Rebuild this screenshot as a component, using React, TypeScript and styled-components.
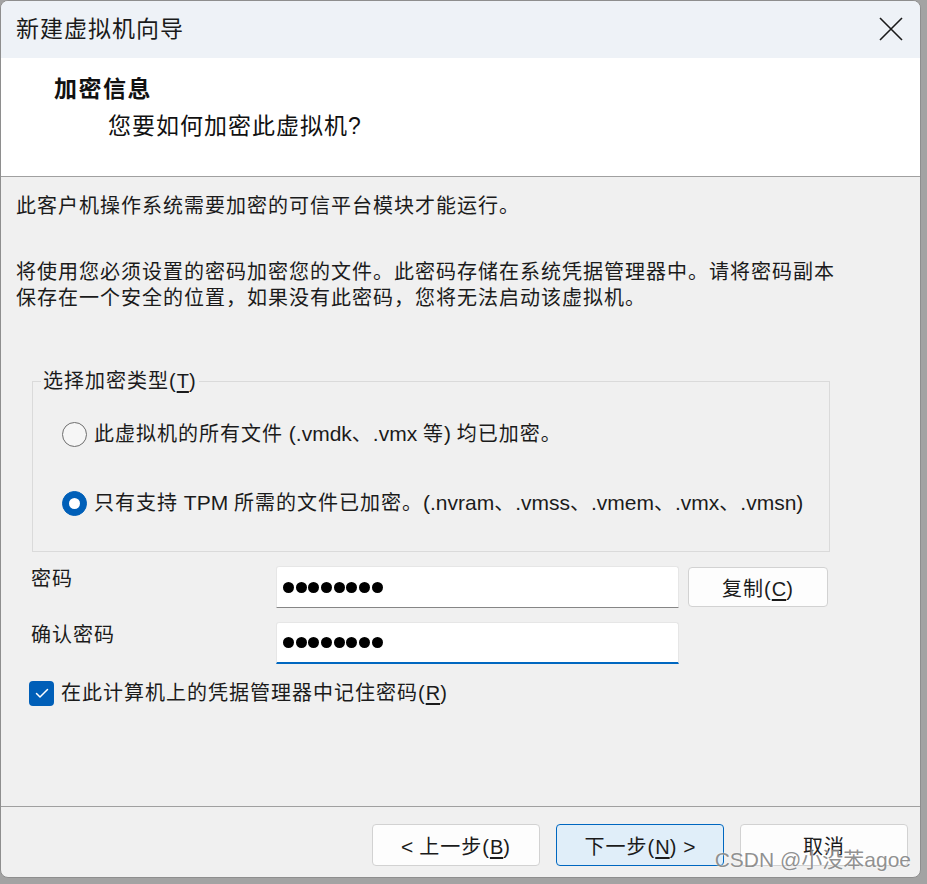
import React from "react";
import styled, { createGlobalStyle } from "styled-components";

const GlobalStyle = createGlobalStyle`
  html, body { margin: 0; padding: 0; background: #a3a3a3; }
  body {
    font-family: "Liberation Sans", "Noto Sans CJK SC", sans-serif;
    color: #1b1b1b;
  }
  * { box-sizing: border-box; }
`;

const Window = styled.div`
  position: relative;
  width: 921px;
  height: 878px;
  background: #f0f0f0;
  border: 1px solid #8e8e8e;
  border-radius: 8px;
  overflow: hidden;
  display: flex;
  flex-direction: column;
`;

const TitleBar = styled.div`
  height: 57px;
  flex: none;
  background: #eef2f7;
  display: flex;
  align-items: center;
  justify-content: space-between;
  padding: 0 16px 0 15px;
`;

const TitleText = styled.div`
  font-size: 23px;
  letter-spacing: 1px;
  line-height: 30px;
  color: #1a1a1a;
  padding-bottom: 2px;
`;

const CloseButton = styled.div`
  width: 26px;
  height: 26px;
  display: flex;
  align-items: center;
  justify-content: center;
  margin-bottom: 1px;
`;

const Header = styled.div`
  flex: none;
  height: 119px;
  background: #ffffff;
  border-bottom: 1px solid #a0a0a0;
  padding: 16px 0 0 53px;
`;

const HeaderTitle = styled.div`
  font-size: 23px;
  font-weight: 700;
  letter-spacing: 1.5px;
  line-height: 30px;
  color: #111;
`;

const HeaderSub = styled.div`
  margin-top: 7px;
  padding-left: 54px;
  font-size: 23px;
  letter-spacing: 1px;
  line-height: 30px;
  color: #111;
`;

const Body = styled.div`
  flex: 1;
  padding: 16px 0 0 15px;
  display: flex;
  flex-direction: column;
  align-items: flex-start;
`;

const Text = styled.div<{ $gap?: number }>`
  margin-top: ${(p) => p.$gap ?? 0}px;
  font-size: 20px;
  letter-spacing: 1px;
  line-height: 26px;
  color: #1b1b1b;
`;

const Group = styled.fieldset`
  margin: 57px 0 0 16px;
  width: 798px;
  padding: 25px 0 33px 8px;
  border: 1px solid #dadada;
  min-width: 0;
`;

const Legend = styled.legend`
  padding: 0 2px;
  font-size: 20px;
  letter-spacing: 1px;
  line-height: 26px;
  color: #1b1b1b;
`;

const RadioList = styled.div`
  display: flex;
  flex-direction: column;
  gap: 39px;
  padding-left: 21px;
`;

const RadioRow = styled.label`
  display: flex;
  align-items: center;
  gap: 7px;
  height: 30px;
  font-size: 20px;
  letter-spacing: 1px;
  line-height: 30px;
  color: #1b1b1b;
`;

const RadioCircle = styled.span<{ $checked?: boolean }>`
  flex: none;
  width: 25px;
  height: 25px;
  border-radius: 50%;
  display: flex;
  align-items: center;
  justify-content: center;
  background: ${(p) => (p.$checked ? "#005fb8" : "#f6f6f6")};
  border: 1px solid ${(p) => (p.$checked ? "#005fb8" : "#6e6e6e")};
  &::after {
    content: "";
    display: ${(p) => (p.$checked ? "block" : "none")};
    width: 11px;
    height: 11px;
    border-radius: 50%;
    background: #ffffff;
  }
`;

const Latin = styled.span`
  letter-spacing: 0;
  font-size: 21px;
`;

const FormGrid = styled.div`
  margin-top: 14px;
  padding-left: 15px;
  display: grid;
  grid-template-columns: 236px 403px 140px;
  column-gap: 9px;
  row-gap: 14px;
  align-items: start;
`;

const FieldLabel = styled.div`
  font-size: 20px;
  letter-spacing: 1px;
  line-height: 26px;
  color: #1b1b1b;
`;

const PasswordBox = styled.div<{ $focused?: boolean }>`
  height: 42px;
  background: #ffffff;
  border: 1px solid #e6e6e6;
  border-bottom: ${(p) => (p.$focused ? "2px solid #0067c0" : "1px solid #868686")};
  border-radius: 3px 3px 0 0;
  display: flex;
  align-items: center;
  gap: 1.7px;
  padding: ${(p) => (p.$focused ? "0 0 0 6px" : "1px 0 0 6px")};
`;

const Dot = styled.span`
  width: 11px;
  height: 11px;
  border-radius: 50%;
  background: #000;
`;

const Button = styled.button<{ $primary?: boolean }>`
  height: 42px;
  padding: 0;
  font-family: inherit;
  font-size: 20px;
  letter-spacing: 1px;
  color: #1b1b1b;
  background: ${(p) => (p.$primary ? "#e0eef9" : "#fdfdfd")};
  border: 1px solid ${(p) => (p.$primary ? "#0067c0" : "#d2d2d2")};
  border-radius: 4px;
  display: flex;
  align-items: center;
  justify-content: center;
  white-space: pre;
`;

const CopyButton = styled(Button)`
  height: 40px;
  margin-top: 1px;
`;

const Mn = styled.span`
  text-decoration: underline;
  text-underline-offset: 3px;
  letter-spacing: 0;
`;

const CheckRow = styled.label`
  margin-top: 16px;
  padding-left: 13px;
  display: flex;
  align-items: center;
  gap: 7px;
  font-size: 20px;
  letter-spacing: 1px;
  line-height: 26px;
  color: #1b1b1b;
`;

const CheckBox = styled.span`
  flex: none;
  width: 25px;
  height: 25px;
  border-radius: 4px;
  background: #005fb8;
  display: flex;
  align-items: center;
  justify-content: center;
`;

const Footer = styled.div`
  flex: none;
  border-top: 1px solid #a0a0a0;
  padding: 17px 12px 11px 0;
  display: flex;
  justify-content: flex-end;
  gap: 16px;
`;

const FooterButton = styled(Button)`
  width: 168px;
`;

const Watermark = styled.div`
  position: absolute;
  right: 9px;
  bottom: 5px;
  font-family: "Liberation Sans", "Noto Sans CJK SC", sans-serif;
  font-size: 21px;
  line-height: 24px;
  color: rgba(125, 125, 125, 0.85);
  text-shadow: 0 0 2px rgba(255, 255, 255, 0.9);
  pointer-events: none;
`;

const Dots: React.FC = () => (
  <>
    {Array.from({ length: 8 }).map((_, i) => (
      <Dot key={i} />
    ))}
  </>
);

export default function App() {
  return (
    <>
      <GlobalStyle />
      <Window>
        <TitleBar>
          <TitleText>新建虚拟机向导</TitleText>
          <CloseButton>
            <svg width="24" height="24" viewBox="0 0 24 24">
              <path d="M1 1 L23 23 M23 1 L1 23" stroke="#1a1a1a" strokeWidth="1.6" fill="none" />
            </svg>
          </CloseButton>
        </TitleBar>
        <Header>
          <HeaderTitle>加密信息</HeaderTitle>
          <HeaderSub>您要如何加密此虚拟机?</HeaderSub>
        </Header>
        <Body>
          <Text>此客户机操作系统需要加密的可信平台模块才能运行。</Text>
          <Text $gap={40}>
            将使用您必须设置的密码加密您的文件。此密码存储在系统凭据管理器中。请将密码副本
            <br />
            保存在一个安全的位置，如果没有此密码，您将无法启动该虚拟机。
          </Text>
          <Group>
            <Legend>
              选择加密类型(<Mn>T</Mn>)
            </Legend>
            <RadioList>
              <RadioRow>
                <RadioCircle />
                <span>
                  此虚拟机的所有文件<Latin> (.vmdk</Latin>、<Latin>.vmx </Latin>等<Latin>) </Latin>均已加密。
                </span>
              </RadioRow>
              <RadioRow>
                <RadioCircle $checked />
                <span>
                  只有支持<Latin> TPM </Latin>所需的文件已加密。<Latin>(.nvram</Latin>、<Latin>.vmss</Latin>、<Latin>.vmem</Latin>、<Latin>.vmx</Latin>、<Latin>.vmsn)</Latin>
                </span>
              </RadioRow>
            </RadioList>
          </Group>
          <FormGrid>
            <FieldLabel>密码</FieldLabel>
            <PasswordBox>
              <Dots />
            </PasswordBox>
            <CopyButton>
              <span>
                复制(<Mn>C</Mn>)
              </span>
            </CopyButton>
            <FieldLabel>确认密码</FieldLabel>
            <PasswordBox $focused>
              <Dots />
            </PasswordBox>
          </FormGrid>
          <CheckRow>
            <CheckBox>
              <svg width="16" height="16" viewBox="0 0 16 16">
                <path d="M2.5 8.5 L6 12 L13.5 4.5" stroke="#ffffff" strokeWidth="1.5" fill="none" strokeLinecap="round" strokeLinejoin="round" />
              </svg>
            </CheckBox>
            <span>
              在此计算机上的凭据管理器中记住密码(<Mn>R</Mn>)
            </span>
          </CheckRow>
        </Body>
        <Footer>
          <FooterButton>
            <span>
              <Latin>{"< "}</Latin>上一步(<Mn>B</Mn>)
            </span>
          </FooterButton>
          <FooterButton $primary>
            <span>
              下一步(<Mn>N</Mn>)<Latin>{" >"}</Latin>
            </span>
          </FooterButton>
          <FooterButton>
            <span>取消</span>
          </FooterButton>
        </Footer>
        <Watermark>CSDN @小没苯agoe</Watermark>
      </Window>
    </>
  );
}
